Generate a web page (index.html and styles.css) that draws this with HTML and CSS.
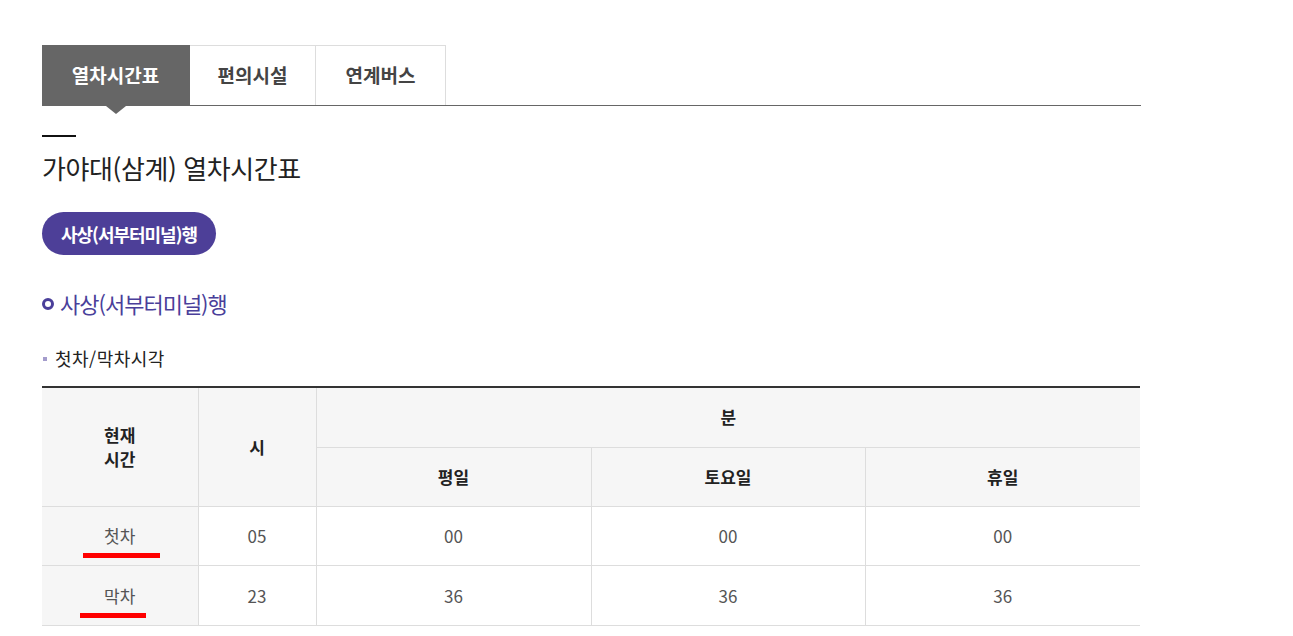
FILE: index.html
```html
<!DOCTYPE html>
<html lang="ko">
<head>
<meta charset="utf-8">
<title>가야대(삼계) 열차시간표</title>
<link rel="stylesheet" href="styles.css">
</head>
<body>
<div class="wrap">
  <ul class="tabs">
    <li class="tab active">열차시간표</li>
    <li class="tab">편의시설</li>
    <li class="tab">연계버스</li>
  </ul>
  <div class="title-bar"></div>
  <h2 class="title">가야대(삼계) 열차시간표</h2>
  <div class="pill">사상(서부터미널)행</div>
  <h3 class="sub"><span class="ring"></span>사상(서부터미널)행</h3>
  <h4 class="small"><span class="sq"></span>첫차/막차시각</h4>
  <table class="tt">
    <colgroup>
      <col class="c1"><col class="c2"><col class="c3"><col class="c4"><col class="c5">
    </colgroup>
    <thead>
      <tr class="r1"><th rowspan="2">현재<br>시간</th><th rowspan="2">시</th><th colspan="3" class="last">분</th></tr>
      <tr><th>평일</th><th>토요일</th><th class="last">휴일</th></tr>
    </thead>
    <tbody>
      <tr><th class="rowh"><span class="mark m1">첫차</span></th><td>05</td><td>00</td><td>00</td><td class="last">00</td></tr>
      <tr class="rl"><th class="rowh"><span class="mark m2">막차</span></th><td>23</td><td>36</td><td>36</td><td class="last">36</td></tr>
    </tbody>
  </table>
</div>
</body>
</html>
```
FILE: styles.css
```css
html, body { margin: 0; padding: 0; background: #fff; }
body { font-family: "Noto Sans CJK KR", "Noto Sans", sans-serif; color: #222; }
.wrap { margin-left: 42px; width: 1099px; padding-top: 45px; }
.tabs { list-style: none; margin: 0; padding: 0; display: flex; border-bottom: 1px solid #666; height: 60px; }
.tab { box-sizing: border-box; height: 60px; padding-bottom: 3px; display: flex; align-items: center; justify-content: center; font-size: 19px; font-weight: 700; color: #444; border: 1px solid #ddd; border-bottom: none; border-left: none; position: relative; }
.tab:nth-child(1) { width: 148px; }
.tab:nth-child(2) { width: 126px; }
.tab:nth-child(3) { width: 130px; }
.tab.active { background: #666; color: #fff; border-color: #666; }
.tab.active::after { content: ""; position: absolute; left: 64px; top: 60px; border-left: 10px solid transparent; border-right: 10px solid transparent; border-top: 8px solid #666; }
.title-bar { width: 34px; height: 2px; background: #111; margin-top: 29px; }
.title { margin: 12px 0 0; font-size: 26px; font-weight: 400; line-height: 38px; letter-spacing: -0.4px; color: #222; }
.pill { display: inline-flex; align-items: center; justify-content: center; margin-top: 25px; height: 43px; width: 174px; border-radius: 22px; background: #4d3f98; color: #fff; font-size: 18px; font-weight: 700; letter-spacing: -1px; }
.sub { margin: 31px 0 0; font-size: 22px; font-weight: 400; color: #4a3f9a; line-height: 34px; display: flex; align-items: center; letter-spacing: -1px; }
.ring { width: 12px; height: 12px; box-sizing: border-box; border: 3px solid #4a3f9a; border-radius: 50%; margin-right: 6px; margin-top: 2px; }
.small { margin: 24px 0 0; font-size: 18px; font-weight: 400; line-height: 28px; display: flex; align-items: center; color: #222; letter-spacing: 0.5px; }
.sq { width: 4px; height: 4px; background: #a49ccc; margin: 2px 8px 0 1px; }
.tt { margin-top: 14px; width: 1098px; border-collapse: collapse; border-top: 2px solid #333; table-layout: fixed; }
.c1 { width: 156px; } .c2 { width: 118px; } .c3 { width: 275px; } .c4 { width: 274px; } .c5 { width: 275px; }
.tt th, .tt td { border: 1px solid #ddd; text-align: center; font-size: 17px; height: 58px; padding: 0; }
.tt th:first-child, .tt td:first-child { border-left: none; }
.tt .last { border-right: none; }
.tt thead th { background: #f6f6f6; font-weight: 700; color: #222; line-height: 24px; }
.tt tbody td { color: #555; font-weight: 400; }
.tt tbody tr { height: 59px; }
.tt thead tr { height: 59px; }
.tt thead tr.r1 { height: 60px; }
.tt tbody tr.rl { height: 60px; }
.tt .rowh { background: #f6f6f6; font-weight: 400; color: #555; }
.mark { position: relative; display: inline-block; }
.mark::after { content: ""; position: absolute; height: 5px; background: #f00; }
.m1::after { left: -21px; width: 77px; top: 30px; }
.m2::after { left: -24px; width: 66px; top: 30px; }
```
